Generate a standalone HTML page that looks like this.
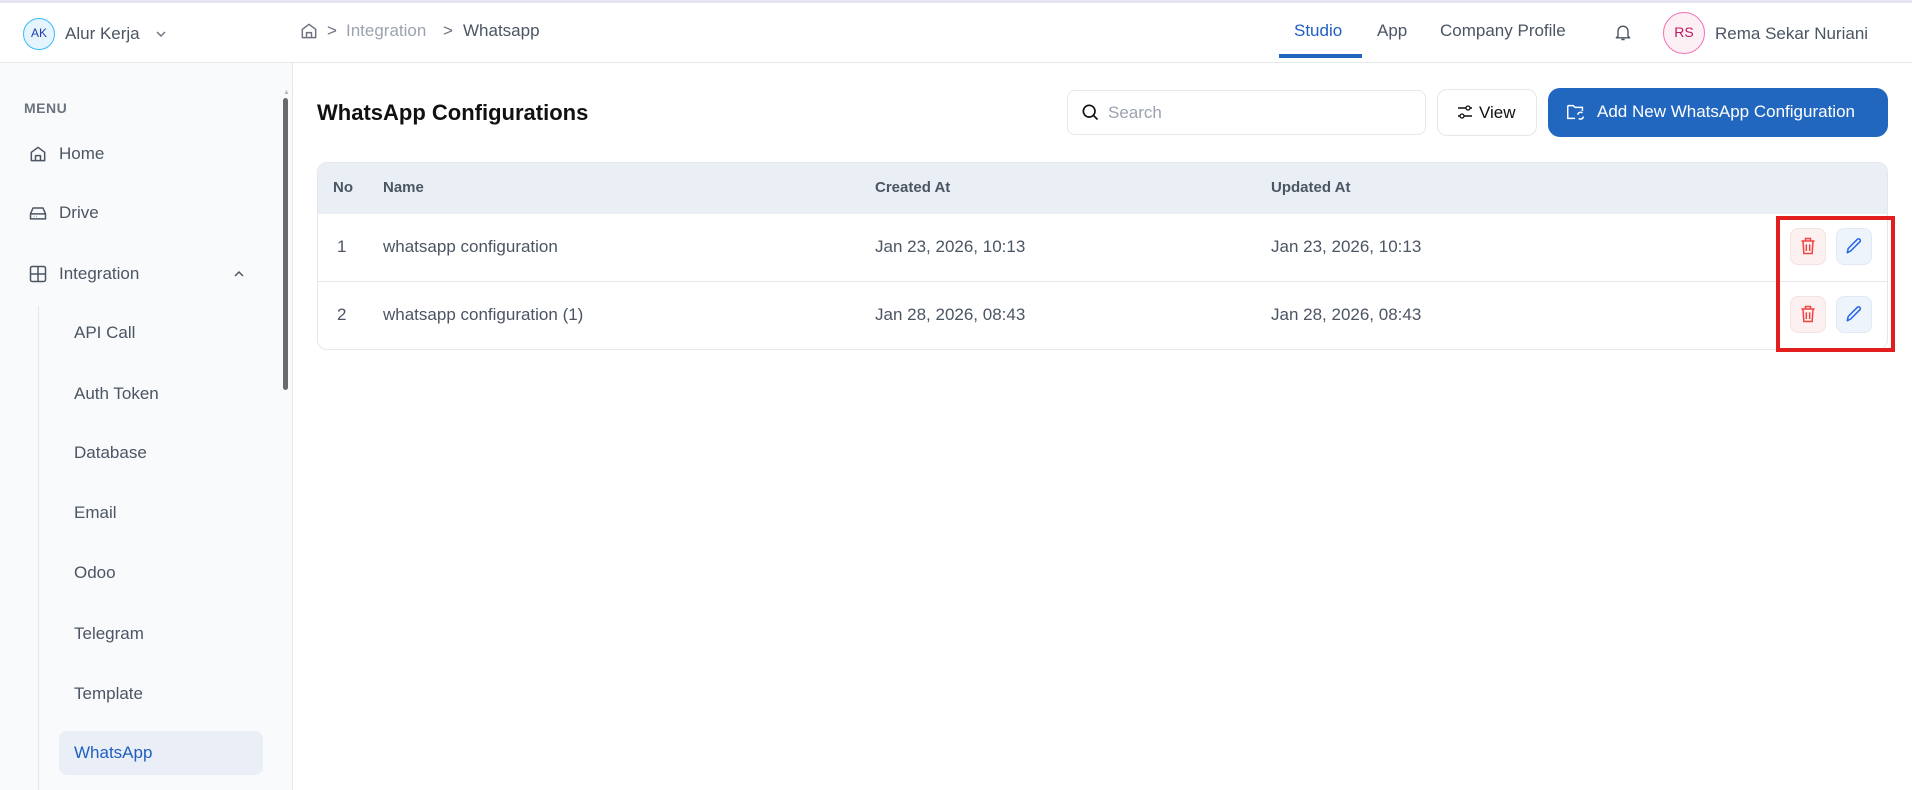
<!DOCTYPE html>
<html><head><meta charset="utf-8"><style>
*{box-sizing:border-box;margin:0;padding:0}
body{width:1912px;height:790px;overflow:hidden;background:#fff;font-family:"Liberation Sans",sans-serif;color:#4b5563;position:relative}
.a{position:absolute;white-space:nowrap}
.t17{font-size:17px}
svg{display:block}
</style></head><body>
<div class="a" style="left:0;top:0;width:1912px;height:3px;background:#e4e4f2"></div>
<div class="a" style="left:0;top:62px;width:1912px;height:1px;background:#e5e7eb"></div>
<!-- header left -->
<div class="a" style="left:23px;top:18px;width:32px;height:32px;border-radius:50%;background:#e6f4fd;border:1.5px solid #38bdf8;font-size:12px;color:#1e40af;text-align:center;line-height:29px">AK</div>
<div class="a t17" style="left:65px;top:24px;color:#4b5563">Alur Kerja</div>
<svg class="a" style="left:155px;top:29px" width="12" height="10"><path d="M2 3l4 4 4-4" stroke="#6b7280" stroke-width="1.4" fill="none"/></svg>
<svg class="a" style="left:299px;top:21px" width="20" height="20" viewBox="0 0 24 24"><path d="M4 10l8-6 8 6v10H4z M9 20v-6h6v6" stroke="#6b7280" stroke-width="1.8" fill="none" stroke-linejoin="round"/></svg>
<div class="a t17" style="left:327px;top:21px;color:#6b7280">&gt;</div>
<div class="a t17" style="left:346px;top:21px;color:#9ca3af">Integration</div>
<div class="a t17" style="left:443px;top:21px;color:#6b7280">&gt;</div>
<div class="a t17" style="left:463px;top:21px;color:#4b5563">Whatsapp</div>
<!-- header right -->
<div class="a t17" style="left:1294px;top:21px;color:#1f5fbf">Studio</div>
<div class="a" style="left:1279px;top:54px;width:83px;height:4px;background:#2167c0"></div>
<div class="a t17" style="left:1377px;top:21px;color:#4b5563">App</div>
<div class="a t17" style="left:1440px;top:21px;color:#4b5563">Company Profile</div>
<svg class="a" style="left:1613px;top:21px" width="20" height="22" viewBox="0 0 24 24"><path d="M6 17V11a6 6 0 0112 0v6l2 2H4z M10 21h4" stroke="#4b5563" stroke-width="1.7" fill="none" stroke-linejoin="round"/></svg>
<div class="a" style="left:1663px;top:12px;width:42px;height:42px;border-radius:50%;background:#fdf0f5;border:1.5px solid #f472b6;font-size:14px;color:#be185d;text-align:center;line-height:39px">RS</div>
<div class="a t17" style="left:1715px;top:24px;color:#4b5563">Rema Sekar Nuriani</div>
<!-- sidebar -->
<div class="a" style="left:0;top:63px;width:293px;height:727px;background:#f9fafb;border-right:1px solid #e5e7eb"></div>
<div class="a" style="left:283px;top:98px;width:5px;height:292px;border-radius:3px;background:#6b6b6b"></div>
<div class="a" style="left:283px;top:89px;font-size:7px;color:#bbb">▲</div>
<div class="a" style="left:24px;top:100px;font-size:14px;font-weight:bold;color:#6b7280;letter-spacing:.5px">MENU</div>
<svg class="a" style="left:28px;top:144px" width="20" height="20" viewBox="0 0 24 24"><path d="M4 10l8-6 8 6v10H4z M9 20v-6h6v6" stroke="#4b5563" stroke-width="1.8" fill="none" stroke-linejoin="round"/></svg>
<div class="a t17" style="left:59px;top:144px">Home</div>
<svg class="a" style="left:28px;top:203px" width="20" height="20" viewBox="0 0 24 24"><path d="M3 13l3-7h12l3 7v6H3z M3 13h18 M7 16h.5 M10 16h.5" stroke="#4b5563" stroke-width="1.8" fill="none" stroke-linejoin="round"/></svg>
<div class="a t17" style="left:59px;top:203px">Drive</div>
<svg class="a" style="left:28px;top:264px" width="20" height="20" viewBox="0 0 24 24"><rect x="3" y="3" width="18" height="18" rx="2" stroke="#4b5563" stroke-width="1.8" fill="none"/><path d="M12 3v18M3 12h18" stroke="#4b5563" stroke-width="1.8"/></svg>
<div class="a t17" style="left:59px;top:264px">Integration</div>
<svg class="a" style="left:233px;top:269px" width="12" height="10"><path d="M2 7l4-4 4 4" stroke="#4b5563" stroke-width="1.5" fill="none"/></svg>
<div class="a" style="left:38px;top:306px;width:1px;height:484px;background:#e5e7eb"></div>
<div class="a t17" style="left:74px;top:323px">API Call</div>
<div class="a t17" style="left:74px;top:384px">Auth Token</div>
<div class="a t17" style="left:74px;top:443px">Database</div>
<div class="a t17" style="left:74px;top:503px">Email</div>
<div class="a t17" style="left:74px;top:563px">Odoo</div>
<div class="a t17" style="left:74px;top:624px">Telegram</div>
<div class="a t17" style="left:74px;top:684px">Template</div>
<div class="a" style="left:59px;top:731px;width:204px;height:44px;border-radius:8px;background:#e9eef7"></div>
<div class="a t17" style="left:74px;top:743px;color:#1f5fbf">WhatsApp</div>
<!-- main -->
<div class="a" style="left:317px;top:100px;font-size:22px;font-weight:bold;color:#111">WhatsApp Configurations</div>
<div class="a" style="left:1067px;top:90px;width:359px;height:45px;border:1px solid #e5e7eb;border-radius:8px"></div>
<svg class="a" style="left:1080px;top:102px" width="20" height="20" viewBox="0 0 24 24"><circle cx="11" cy="11" r="7" stroke="#111" stroke-width="2" fill="none"/><path d="M16 16l5 5" stroke="#111" stroke-width="2"/></svg>
<div class="a t17" style="left:1108px;top:103px;color:#9ca3af">Search</div>
<div class="a" style="left:1437px;top:89px;width:100px;height:47px;border:1px solid #e5e7eb;border-radius:10px"></div>
<svg class="a" style="left:1457px;top:104px" width="16" height="16" viewBox="0 0 16 16"><path d="M1 4h8M13 4h2M1 12h2M7 12h8" stroke="#111" stroke-width="1.4"/><circle cx="11" cy="4" r="2" stroke="#111" stroke-width="1.3" fill="none"/><circle cx="5" cy="12" r="2" stroke="#111" stroke-width="1.3" fill="none"/></svg>
<div class="a t17" style="left:1479px;top:103px;color:#111">View</div>
<div class="a" style="left:1548px;top:88px;width:340px;height:49px;border-radius:12px;background:#2167c0"></div>
<svg class="a" style="left:1565px;top:101px" width="22" height="22" viewBox="0 0 24 24"><path d="M3 5h6l2 2h8v4 M3 5v14h8" stroke="#fff" stroke-width="1.6" fill="none"/><path d="M14 15a3 3 0 015-2 M20 17a3 3 0 01-5 2" stroke="#fff" stroke-width="1.6" fill="none"/></svg>
<div class="a t17" style="left:1597px;top:102px;color:#fff">Add New WhatsApp Configuration</div>
<!-- table -->
<div class="a" style="left:317px;top:162px;width:1571px;height:188px;border:1px solid #e5e7eb;border-radius:10px;overflow:hidden">
 <div style="height:51px;background:#eaeef5"></div>
 <div style="height:68px;border-bottom:1px solid #e5e7eb"></div>
</div>
<div class="a" style="left:333px;top:179px;font-size:15px;font-weight:bold;color:#4b5563">No</div>
<div class="a" style="left:383px;top:179px;font-size:15px;font-weight:bold;color:#4b5563">Name</div>
<div class="a" style="left:875px;top:179px;font-size:15px;font-weight:bold;color:#4b5563">Created At</div>
<div class="a" style="left:1271px;top:179px;font-size:15px;font-weight:bold;color:#4b5563">Updated At</div>
<div class="a t17" style="left:337px;top:237px">1</div>
<div class="a t17" style="left:383px;top:237px">whatsapp configuration</div>
<div class="a t17" style="left:875px;top:237px">Jan 23, 2026, 10:13</div>
<div class="a t17" style="left:1271px;top:237px">Jan 23, 2026, 10:13</div>
<div class="a t17" style="left:337px;top:305px">2</div>
<div class="a t17" style="left:383px;top:305px">whatsapp configuration (1)</div>
<div class="a t17" style="left:875px;top:305px">Jan 28, 2026, 08:43</div>
<div class="a t17" style="left:1271px;top:305px">Jan 28, 2026, 08:43</div>
<!-- actions -->
<div class="a" style="left:1790px;top:228px;width:36px;height:37px;border-radius:8px;background:#fdf0f0;border:1px solid #f3e3e3"></div>
<div class="a" style="left:1836px;top:228px;width:36px;height:37px;border-radius:8px;background:#eef4fc;border:1px solid #e1e9f5"></div>
<div class="a" style="left:1790px;top:296px;width:36px;height:37px;border-radius:8px;background:#fdf0f0;border:1px solid #f3e3e3"></div>
<div class="a" style="left:1836px;top:296px;width:36px;height:37px;border-radius:8px;background:#eef4fc;border:1px solid #e1e9f5"></div>
<svg class="a" style="left:1798px;top:236px" width="20" height="20" viewBox="0 0 24 24"><path d="M4 6h16M9 6V3h6v3M6 6l1 15h10l1-15M10 10v8M14 10v8" stroke="#ef4444" stroke-width="1.8" fill="none"/></svg>
<svg class="a" style="left:1844px;top:236px" width="20" height="20" viewBox="0 0 24 24"><path d="M4 20l1-5L16 4a2 2 0 013 3L8 18z" stroke="#2563eb" stroke-width="1.8" fill="none" stroke-linejoin="round"/></svg>
<svg class="a" style="left:1798px;top:304px" width="20" height="20" viewBox="0 0 24 24"><path d="M4 6h16M9 6V3h6v3M6 6l1 15h10l1-15M10 10v8M14 10v8" stroke="#ef4444" stroke-width="1.8" fill="none"/></svg>
<svg class="a" style="left:1844px;top:304px" width="20" height="20" viewBox="0 0 24 24"><path d="M4 20l1-5L16 4a2 2 0 013 3L8 18z" stroke="#2563eb" stroke-width="1.8" fill="none" stroke-linejoin="round"/></svg>
<div class="a" style="left:1776px;top:216px;width:119px;height:136px;border:4px solid #e11d1d"></div>
</body></html>
